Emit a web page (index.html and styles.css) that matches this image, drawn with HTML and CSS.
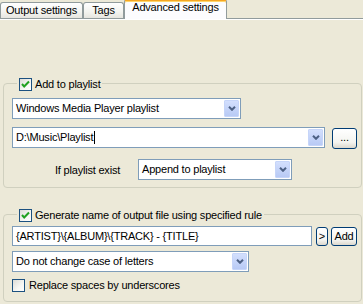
FILE: index.html
```html
<!DOCTYPE html>
<html>
<head>
<meta charset="utf-8">
<link rel="stylesheet" href="styles.css">
</head>
<body>
<div class="tabs">
  <div class="tab t1">Output settings</div>
  <div class="tab t2">Tags</div>
  <div class="tab active">Advanced settings</div>
  <div class="tab-fill"></div>
</div>
<div class="panel">
  <section class="group g1">
    <div class="title">
      <span class="cb"><svg width="11" height="11" viewBox="0 0 11 11"><path d="M2 5 L4.2 7.5 L9 2.5" fill="none" stroke="#21A121" stroke-width="2"/></svg></span>
      <span>Add to playlist</span>
    </div>
    <div class="combo w-dd1 dd1">
      <span class="val">Windows Media Player playlist</span>
      <span class="drop"><svg width="8" height="5" viewBox="0 0 8 5"><polyline points="1,0.8 4,3.8 7,0.8" fill="none" stroke="#4D6185" stroke-width="2"/></svg></span>
    </div>
    <div class="row r2">
      <div class="combo w-path">
        <span class="val">D:\Music\Playlist<span class="caret"></span></span>
        <span class="drop"><svg width="8" height="5" viewBox="0 0 8 5"><polyline points="1,0.8 4,3.8 7,0.8" fill="none" stroke="#4D6185" stroke-width="2"/></svg></span>
      </div>
      <div class="btn b-dots">...</div>
    </div>
    <div class="row r3">
      <span class="lbl">If playlist exist</span>
      <div class="combo w-exist">
        <span class="val">Append to playlist</span>
        <span class="drop"><svg width="8" height="5" viewBox="0 0 8 5"><polyline points="1,0.8 4,3.8 7,0.8" fill="none" stroke="#4D6185" stroke-width="2"/></svg></span>
      </div>
    </div>
  </section>

  <section class="group g2">
    <div class="title">
      <span class="cb"><svg width="11" height="11" viewBox="0 0 11 11"><path d="M2 5 L4.2 7.5 L9 2.5" fill="none" stroke="#21A121" stroke-width="2"/></svg></span>
      <span>Generate name of output file using specified rule</span>
    </div>
    <div class="row r-rule">
      <div class="textbox w-rule">{ARTIST}\{ALBUM}\{TRACK} - {TITLE}</div>
      <div class="btn b-arrow">&gt;</div>
      <div class="btn b-add">Add</div>
    </div>
    <div class="combo w-case dd-case">
      <span class="val">Do not change case of letters</span>
      <span class="drop"><svg width="8" height="5" viewBox="0 0 8 5"><polyline points="1,0.8 4,3.8 7,0.8" fill="none" stroke="#4D6185" stroke-width="2"/></svg></span>
    </div>
    <div class="check-row">
      <span class="cb"></span>
      <span>Replace spaces by underscores</span>
    </div>
  </section>
</div>
</body>
</html>
```

FILE: styles.css
```css
html, body {
  margin: 0;
  padding: 0;
}
body {
  width: 363px;
  height: 304px;
  overflow: hidden;
  background: #ECE9D8;
  font-family: "Liberation Sans", Arial, sans-serif;
  font-size: 11px;
  letter-spacing: -0.2px;
  color: #000;
}

/* Tabs */
.tabs {
  display: flex;
  align-items: flex-end;
  height: 19px;
  box-sizing: border-box;
  border-bottom: 1px solid #919B9C;
}
.tab {
  box-sizing: border-box;
  height: 16px;
  margin-bottom: 0;
  border: 1px solid #919B9C;
  border-bottom: none;
  border-radius: 3px 3px 0 0;
  background: linear-gradient(#FFFFFF, #F3F3EF 60%, #E6E5DF);
  text-align: center;
  line-height: 14px;
  white-space: nowrap;
}
.t1 { width: 83px; }
.t2 { width: 41px; }
.tab.active {
  width: 103px;
  height: 20px;
  margin-bottom: -1px;
  border-top: 2px solid #F5A623;
  border-left-color: #919B9C;
  background: #FCFCFE;
  line-height: 12px;
  position: relative;
  box-shadow: inset 0 1px 0 #FFD56A;
}
.tab-fill { flex: 1; }

/* Panel */
.panel {
  border-top: 1px solid #FFFFFF;
  padding-top: 63px;
  display: flex;
  flex-direction: column;
}

.group {
  margin: 0 1px 0 3px;
  border: 1px solid #D0D0BF;
  border-radius: 4px;
  padding: 0 0 7px 8px;
  display: flex;
  flex-direction: column;
  align-items: flex-start;
}
.g2 {
  margin-top: 26px;
  padding-bottom: 9px;
}

.title {
  margin-top: -7px;
  margin-left: 5px;
  padding: 0 2px;
  background: #ECE9D8;
  height: 14px;
  display: flex;
  align-items: center;
  gap: 3px;
  line-height: 14px;
  white-space: nowrap;
}

/* Checkbox */
.cb {
  box-sizing: border-box;
  width: 13px;
  height: 13px;
  border: 1px solid #1C5180;
  background: linear-gradient(135deg, #DCDCD7, #F6F6F3 60%, #FFFFFF);
  display: flex;
  align-items: center;
  justify-content: center;
  flex: none;
}

/* Combo boxes */
.combo {
  box-sizing: border-box;
  height: 21px;
  border: 1px solid #7F9DB9;
  background: #FFFFFF;
  display: flex;
  align-items: center;
}
.combo .val {
  flex: 1;
  padding-left: 3px;
  line-height: 13px;
  white-space: nowrap;
  overflow: hidden;
  display: flex;
  align-items: center;
}
.drop {
  box-sizing: border-box;
  width: 15px;
  height: 17px;
  margin-right: 1px;
  border: 1px solid #C6D5F9;
  border-radius: 1px;
  background: linear-gradient(#D3DFFD, #B8CAF5);
  display: flex;
  align-items: center;
  justify-content: center;
  flex: none;
}
.caret {
  display: inline-block;
  width: 1px;
  height: 13px;
  background: #000;
  margin-left: 1px;
}

.w-dd1 { width: 229px; }
.w-path { width: 313px; }
.w-exist { width: 154px; }
.w-case { width: 237px; }
.w-rule { width: 300px; }

.dd1 { margin-top: 7px; }
.dd-case { margin-top: 5px; }

.row {
  display: flex;
  align-items: flex-start;
}
.r2 { margin-top: 8px; gap: 7px; }
.r3 { margin-top: 10px; padding-left: 43px; align-items: center; }
.r-rule { margin-top: 4px; }

.lbl {
  width: 83px;
  white-space: nowrap;
}

/* Textbox */
.textbox {
  box-sizing: border-box;
  height: 20px;
  border: 1px solid #7F9DB9;
  background: #FFFFFF;
  padding-left: 3px;
  line-height: 18px;
  white-space: nowrap;
}

/* Buttons */
.btn {
  box-sizing: border-box;
  border: 1px solid #003C74;
  border-radius: 3px;
  background: linear-gradient(#FFFFFF, #F4F4F0 70%, #DCD8CD);
  text-align: center;
  white-space: nowrap;
  flex: none;
}
.b-dots {
  width: 25px;
  height: 21px;
  margin-top: 1px;
  line-height: 17px;
}
.b-arrow {
  width: 12px;
  height: 19px;
  margin-left: 4px;
  margin-top: 1px;
  line-height: 17px;
  letter-spacing: 0;
}
.b-add {
  width: 26px;
  height: 19px;
  margin-left: 3px;
  margin-top: 1px;
  line-height: 17px;
}

.check-row {
  margin-top: 6px;
  height: 14px;
  display: flex;
  align-items: center;
  gap: 4px;
  white-space: nowrap;
}
```
